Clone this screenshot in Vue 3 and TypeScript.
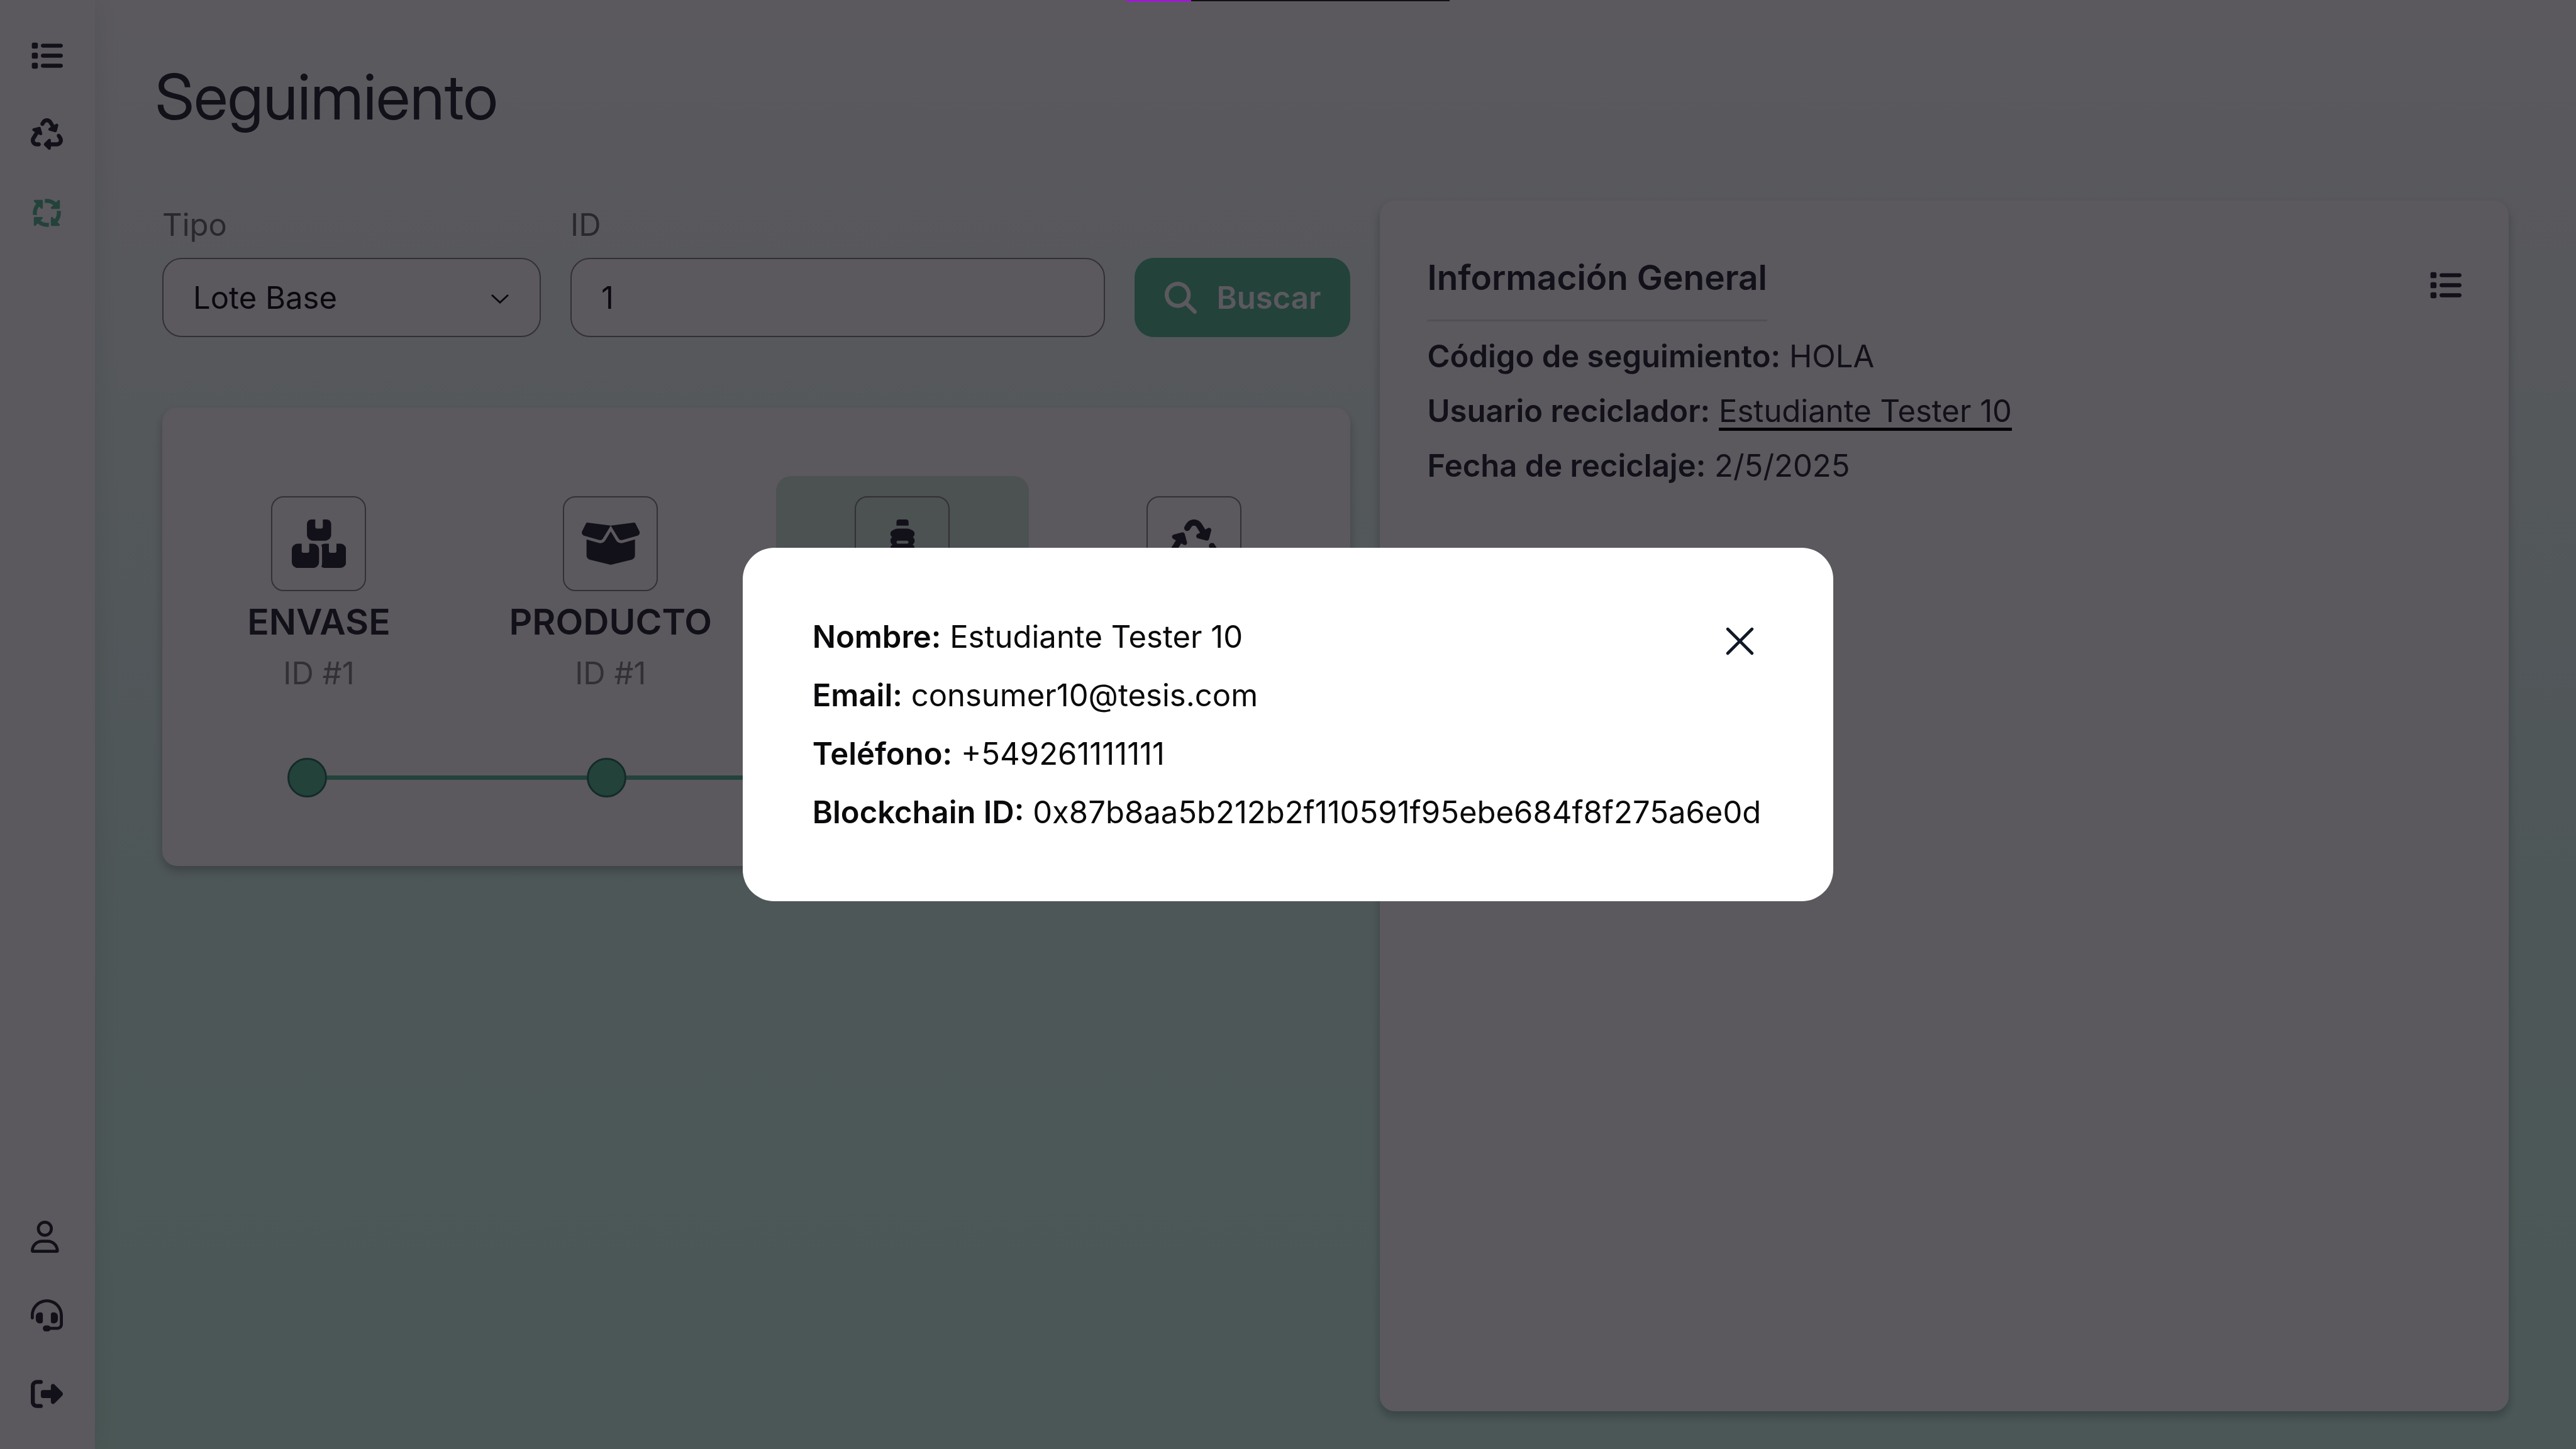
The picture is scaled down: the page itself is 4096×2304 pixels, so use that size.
<script setup lang="ts">
import { ref } from 'vue'

interface Icon {
  box: string
  path: string
}

interface Stage {
  icon: string
  name?: string
  code?: string
}

const icons: Record<string, Icon> = {
  list: {
    box: '0 0 512 512',
    path: 'M40 48C26.7 48 16 58.7 16 72v48c0 13.3 10.7 24 24 24H88c13.3 0 24-10.7 24-24V72c0-13.3-10.7-24-24-24H40zM192 64c-17.7 0-32 14.3-32 32s14.3 32 32 32H480c17.7 0 32-14.3 32-32s-14.3-32-32-32H192zm0 160c-17.7 0-32 14.3-32 32s14.3 32 32 32H480c17.7 0 32-14.3 32-32s-14.3-32-32-32H192zm0 160c-17.7 0-32 14.3-32 32s14.3 32 32 32H480c17.7 0 32-14.3 32-32s-14.3-32-32-32H192zM16 232v48c0 13.3 10.7 24 24 24H88c13.3 0 24-10.7 24-24V232c0-13.3-10.7-24-24-24H40c-13.3 0-24 10.7-24 24zM40 368c-13.3 0-24 10.7-24 24v48c0 13.3 10.7 24 24 24H88c13.3 0 24-10.7 24-24V392c0-13.3-10.7-24-24-24H40z',
  },
  recycle: {
    box: '0 0 512 512',
    path: 'M174.7 45.1C192.2 17 223 0 256 0s63.8 17 81.3 45.1l38.6 61.7 27-15.6c8.4-4.9 18.9-4.2 26.6 1.7s11.1 15.9 8.6 25.3l-23.4 87.4c-3.4 12.8-16.6 20.4-29.4 17l-87.4-23.4c-9.4-2.5-16.3-10.4-17.6-20s3.4-19.1 11.8-23.9l28.4-16.4L283 79c-5.8-9.3-16-15-27-15s-21.2 5.7-27 15l-17.5 28c-9.2 14.8-28.6 19.5-43.6 10.5c-15.3-9.2-20.2-29.2-10.7-44.4l17.5-28zM429.5 251.9c15-9 34.4-4.3 43.6 10.5l24.4 39.1c9.4 15.1 14.4 32.4 14.6 50.2c.3 53.1-42.7 96.4-95.8 96.4L320 448v32c0 9.7-5.8 18.5-14.8 22.2s-19.3 1.7-26.2-5.2l-64-64c-9.4-9.4-9.4-24.6 0-33.9l64-64c6.9-6.9 17.2-8.9 26.2-5.2s14.8 12.5 14.8 22.2v32l96.2 0c17.6 0 31.9-14.4 31.8-32c0-5.9-1.7-11.7-4.8-16.7l-24.4-39.1c-9.5-15.2-4.7-35.2 10.7-44.4zm-364.6-31L36 204.2c-8.4-4.9-13.1-14.3-11.8-23.9s8.2-17.5 17.6-20l87.4-23.4c12.8-3.4 26 4.2 29.4 17L182 241.2c2.5 9.4-.9 19.3-8.6 25.3s-18.2 6.6-26.6 1.7l-26.5-15.3L68.8 335.3c-3.1 5-4.8 10.8-4.8 16.7c-.1 17.6 14.2 32 31.8 32l32.2 0c17.7 0 32 14.3 32 32s-14.3 32-32 32l-32.2 0C42.7 448-.3 404.8 0 351.6c.1-17.8 5.1-35.1 14.6-50.2l50.3-80.5z',
  },
  tracking: {
    box: '0 0 512 512',
    path: 'M256 96c38.4 0 73.7 13.5 101.3 36.1l-32.6 32.6c-4.6 4.6-5.9 11.5-3.5 17.4s8.3 9.9 14.8 9.9H448c8.8 0 16-7.2 16-16V64c0-6.5-3.9-12.3-9.9-14.8s-12.9-1.1-17.4 3.5l-34 34C363.4 52.6 312.1 32 256 32c-10.9 0-21.5 .8-32 2.3V99.2c10.3-2.1 21-3.2 32-3.2zM132.1 154.7l32.6 32.6c4.6 4.6 11.5 5.9 17.4 3.5s9.9-8.3 9.9-14.8V64c0-8.8-7.2-16-16-16H64c-6.5 0-12.3 3.9-14.8 9.9s-1.1 12.9 3.5 17.4l34 34C52.6 148.6 32 199.9 32 256c0 10.9 .8 21.5 2.3 32H99.2c-2.1-10.3-3.2-21-3.2-32c0-38.4 13.5-73.7 36.1-101.3zM477.7 224H412.8c2.1 10.3 3.2 21 3.2 32c0 38.4-13.5 73.7-36.1 101.3l-32.6-32.6c-4.6-4.6-11.5-5.9-17.4-3.5s-9.9 8.3-9.9 14.8V448c0 8.8 7.2 16 16 16H448c6.5 0 12.3-3.9 14.8-9.9s1.1-12.9-3.5-17.4l-34-34C459.4 363.4 480 312.1 480 256c0-10.9-.8-21.5-2.3-32zM256 416c-38.4 0-73.7-13.5-101.3-36.1l32.6-32.6c4.6-4.6 5.9-11.5 3.5-17.4s-8.3-9.9-14.8-9.9H64c-8.8 0-16 7.2-16 16l0 112c0 6.5 3.9 12.3 9.9 14.8s12.9 1.1 17.4-3.5l34-34C148.6 459.4 199.9 480 256 480c10.9 0 21.5-.8 32-2.3V412.8c-10.3 2.1-21 3.2-32 3.2z',
  },
  user: {
    box: '0 0 448 512',
    path: 'M304 128a80 80 0 1 0 -160 0 80 80 0 1 0 160 0zM96 128a128 128 0 1 1 256 0A128 128 0 1 1 96 128zM49.3 464H398.7c-8.9-63.3-63.3-112-129-112H178.3c-65.7 0-120.1 48.7-129 112zM0 482.3C0 383.8 79.8 304 178.3 304h91.4C368.2 304 448 383.8 448 482.3c0 16.4-13.3 29.7-29.7 29.7H29.7C13.3 512 0 498.7 0 482.3z',
  },
  headset: {
    box: '0 0 512 512',
    path: 'M256 48C141.1 48 48 141.1 48 256v40c0 13.3-10.7 24-24 24s-24-10.7-24-24V256C0 114.6 114.6 0 256 0S512 114.6 512 256V400.1c0 48.6-39.4 88-88.1 88L313.6 488c-8.3 14.3-23.8 24-41.6 24H240c-26.5 0-48-21.5-48-48s21.5-48 48-48h32c17.8 0 33.3 9.7 41.6 24l110.4 .1c22.1 0 40-17.9 40-40V256c0-114.9-93.1-208-208-208zM144 208h16c17.7 0 32 14.3 32 32V352c0 17.7-14.3 32-32 32H144c-35.3 0-64-28.7-64-64V272c0-35.3 28.7-64 64-64zm224 0c35.3 0 64 28.7 64 64v48c0 35.3-28.7 64-64 64H352c-17.7 0-32-14.3-32-32V240c0-17.7 14.3-32 32-32h16z',
  },
  logout: {
    box: '0 0 512 512',
    path: 'M377.9 105.9L500.7 228.7c7.2 7.2 11.3 17.1 11.3 27.3s-4.1 20.1-11.3 27.3L377.9 406.1c-6.4 6.4-15 9.9-24 9.9c-18.7 0-33.9-15.2-33.9-33.9l0-62.1-128 0c-17.7 0-32-14.3-32-32l0-64c0-17.7 14.3-32 32-32l128 0 0-62.1c0-18.7 15.2-33.9 33.9-33.9c9 0 17.6 3.6 24 9.9zM160 96L96 96c-17.7 0-32 14.3-32 32l0 256c0 17.7 14.3 32 32 32l64 0c17.7 0 32 14.3 32 32s-14.3 32-32 32l-64 0c-53 0-96-43-96-96L0 128C0 75 43 32 96 32l64 0c17.7 0 32 14.3 32 32s-14.3 32-32 32z',
  },
  search: {
    box: '0 0 512 512',
    path: 'M416 208c0 45.9-14.9 88.3-40 122.7L502.6 457.4c12.5 12.5 12.5 32.8 0 45.3s-32.8 12.5-45.3 0L330.7 376c-34.4 25.2-76.8 40-122.7 40C93.1 416 0 322.9 0 208S93.1 0 208 0S416 93.1 416 208zM208 352a144 144 0 1 0 0-288 144 144 0 1 0 0 288z',
  },
  boxes: {
    box: '0 0 576 512',
    path: 'M248 0H208c-26.5 0-48 21.5-48 48V160c0 35.3 28.7 64 64 64H352c35.3 0 64-28.7 64-64V48c0-26.5-21.5-48-48-48H328V80c0 8.8-7.2 16-16 16H264c-8.8 0-16-7.2-16-16V0zM64 256c-35.3 0-64 28.7-64 64V448c0 35.3 28.7 64 64 64H224c35.3 0 64-28.7 64-64V320c0-35.3-28.7-64-64-64H184v80c0 8.8-7.2 16-16 16H120c-8.8 0-16-7.2-16-16V256H64zM352 512H512c35.3 0 64-28.7 64-64V320c0-35.3-28.7-64-64-64H472v80c0 8.8-7.2 16-16 16H408c-8.8 0-16-7.2-16-16V256H352c-15 0-28.8 5.1-39.7 13.8c4.9 10.4 7.7 22 7.7 34.2V464c0 12.2-2.8 23.8-7.7 34.2C323.2 506.9 337 512 352 512z',
  },
  openBox: {
    box: '0 0 640 512',
    path: 'M58.9 42.1c3-6.1 9.6-9.6 16.3-8.7L320 64 564.8 33.4c6.7-.8 13.3 2.7 16.3 8.7l41.7 83.4c9 17.9-.6 39.6-19.8 45.1L439.6 217.3c-13.9 4-28.8-1.9-36.2-14.3L320 64 236.6 203c-7.4 12.4-22.3 18.3-36.2 14.3L37.1 170.6c-19.3-5.5-28.8-27.2-19.8-45.1L58.9 42.1zM321.1 128l54.9 91.4c14.9 24.8 44.6 36.6 72.5 28.6L576 211.6v167c0 22-15 41.2-36.4 46.6l-204.1 51c-10.2 2.6-20.9 2.6-31 0l-204.1-51C79 419.7 64 400.5 64 378.5v-167L191.6 248c27.8 8 57.6-3.8 72.5-28.6L318.9 128h2.2z',
  },
  bottle: {
    box: '0 0 320 512',
    path: 'M120 0h80c13.3 0 24 10.7 24 24V64H96V24c0-13.3 10.7-24 24-24zM32 151.7c0-15.6 9-29.8 23.2-36.5l24.4-11.4c11-5.1 23-7.8 35.1-7.8h90.6c12.1 0 24.1 2.7 35.1 7.8l24.4 11.4c14.1 6.6 23.2 20.8 23.2 36.5c0 14.4-7.5 27-18.9 34.1c11.5 8.8 18.9 22.6 18.9 38.2c0 16.7-8.5 31.4-21.5 40c12.9 8.6 21.5 23.3 21.5 40s-8.5 31.4-21.5 40c12.9 8.6 21.5 23.3 21.5 40s-8.5 31.4-21.5 40c12.9 8.6 21.5 23.3 21.5 40c0 26.5-21.5 48-48 48H80c-26.5 0-48-21.5-48-48c0-16.7 8.5-31.4 21.5-40C40.5 415.4 32 400.7 32 384s8.5-31.4 21.5-40C40.5 335.4 32 320.7 32 304s8.5-31.4 21.5-40C40.5 255.4 32 240.7 32 224c0-15.6 7.4-29.4 18.9-38.2C39.5 178.7 32 166.1 32 151.7zM96 240c0 8.8 7.2 16 16 16h96c8.8 0 16-7.2 16-16s-7.2-16-16-16H112c-8.8 0-16 7.2-16 16zm16 112c-8.8 0-16 7.2-16 16s7.2 16 16 16h96c8.8 0 16-7.2 16-16s-7.2-16-16-16H112z',
  },
}

const topLinks = [
  { icon: 'list', label: 'Listado', active: false },
  { icon: 'recycle', label: 'Reciclaje', active: false },
  { icon: 'tracking', label: 'Seguimiento', active: true },
]

const bottomLinks = [
  { icon: 'user', label: 'Perfil' },
  { icon: 'headset', label: 'Soporte' },
  { icon: 'logout', label: 'Salir' },
]

const stages: Stage[] = [
  { icon: 'boxes', name: 'ENVASE', code: 'ID #1' },
  { icon: 'openBox', name: 'PRODUCTO', code: 'ID #1' },
  { icon: 'bottle' },
  { icon: 'recycle' },
]

const person = [
  { label: 'Nombre:', value: 'Estudiante Tester 10' },
  { label: 'Email:', value: 'consumer10@tesis.com' },
  { label: 'Teléfono:', value: '+549261111111' },
  { label: 'Blockchain ID:', value: '0x87b8aa5b212b2f110591f95ebe684f8f275a6e0d' },
]

const selectedStage = ref(2)
const kind = ref('base')
const lotId = ref('1')
const personOpen = ref(true)
</script>

<template>
  <div class="page">
    <nav class="sidebar">
      <div class="links">
        <a v-for="l in topLinks" :key="l.icon" href="#" class="link" :class="{ active: l.active }" :aria-label="l.label">
          <svg class="icon" :viewBox="icons[l.icon].box"><path :d="icons[l.icon].path" /></svg>
        </a>
      </div>
      <div class="links">
        <a v-for="l in bottomLinks" :key="l.icon" href="#" class="link" :aria-label="l.label">
          <svg class="icon" :viewBox="icons[l.icon].box"><path :d="icons[l.icon].path" /></svg>
        </a>
      </div>
    </nav>

    <main class="main">
      <h1 class="title">Seguimiento</h1>
      <div class="columns">
        <section class="left">
          <form class="search" @submit.prevent>
            <div class="field kind">
              <label for="kind">Tipo</label>
              <div class="select-wrap">
                <select id="kind" v-model="kind" class="control">
                  <option value="base">Lote Base</option>
                </select>
                <svg class="chevron" viewBox="0 0 30 16"><path d="M2 2 15 14 28 2" /></svg>
              </div>
            </div>
            <div class="field lot">
              <label for="lot">ID</label>
              <input id="lot" v-model="lotId" class="control" type="text" />
            </div>
            <button class="submit" type="submit">
              <svg class="icon" :viewBox="icons.search.box"><path :d="icons.search.path" /></svg>
              Buscar
            </button>
          </form>

          <div class="card stages-card">
            <div class="stages">
              <button
                v-for="(s, i) in stages"
                :key="s.icon"
                type="button"
                class="stage"
                :class="{ selected: i === selectedStage }"
                @click="selectedStage = i"
              >
                <span class="tile">
                  <svg class="tile-icon" :viewBox="icons[s.icon].box"><path :d="icons[s.icon].path" /></svg>
                </span>
                <span v-if="s.name" class="stage-name">{{ s.name }}</span>
                <span v-if="s.code" class="stage-code">{{ s.code }}</span>
              </button>
            </div>
            <div class="track">
              <template v-for="(s, i) in stages" :key="s.icon">
                <span v-if="i > 0" class="line"></span>
                <span class="dot"></span>
              </template>
            </div>
          </div>
        </section>

        <section class="card info">
          <div class="info-head">
            <h2>Información General</h2>
            <button type="button" class="plain" aria-label="Ver detalle">
              <svg class="icon" :viewBox="icons.list.box"><path :d="icons.list.path" /></svg>
            </button>
          </div>
          <p><strong>Código de seguimiento:</strong> HOLA</p>
          <p>
            <strong>Usuario reciclador:</strong>&#32;<a href="#" @click.prevent="personOpen = true">Estudiante Tester 10</a>
          </p>
          <p><strong>Fecha de reciclaje:</strong> 2/5/2025</p>
        </section>
      </div>
    </main>

    <div v-if="personOpen" class="overlay">
      <div class="dialog" role="dialog" aria-modal="true">
        <button type="button" class="close" aria-label="Cerrar" @click="personOpen = false">
          <svg viewBox="0 0 24 24"><path d="M6 18 18 6M6 6l12 12" /></svg>
        </button>
        <p v-for="row in person" :key="row.label">
          <strong>{{ row.label }}</strong> {{ row.value }}
        </p>
      </div>
    </div>
    <div class="progress"><span></span></div>
  </div>
</template>

<style>
html,
body {
  margin: 0;
  overflow: hidden;
}
</style>

<style scoped>
.page {
  --ink: #2f2f38;
  --green: #5ebd97;
  --muted: #8a8a8a;
  display: flex;
  min-height: 100vh;
  background: linear-gradient(180deg, #ffffff 0%, #daf8ee 60%, #cefae7 100%);
  color: var(--ink);
  font-family: Inter, 'Liberation Sans', sans-serif;
  font-size: 49px;
}
.page * {
  box-sizing: border-box;
}
button,
select,
input {
  font: inherit;
  color: inherit;
}
h1,
h2,
p {
  margin: 0;
}
strong {
  font-weight: 600;
}
svg {
  display: block;
  fill: currentColor;
}
.icon {
  height: 51px;
}

.sidebar {
  display: flex;
  flex-direction: column;
  justify-content: space-between;
  width: 151px;
  padding: 63px 50px 62px 49px;
  background: #ffffff;
  box-shadow: 0 0 40px rgba(0, 40, 30, 0.1);
}
.links {
  display: flex;
  flex-direction: column;
  gap: 74px;
}
.link {
  color: inherit;
}
.link.active {
  color: var(--green);
}

.main {
  flex: 1;
  display: flex;
  flex-direction: column;
  padding: 78px 96px 60px;
}
.title {
  font-family: 'Inter Display', Inter, 'Liberation Sans', sans-serif;
  font-size: 100px;
  line-height: 152px;
  font-weight: 400;
}
.columns {
  flex: 1;
  display: grid;
  grid-template-columns: 1890fr 1795fr;
  gap: 47px;
  padding: 0 11px;
  margin-top: 89px;
}
.left {
  display: flex;
  flex-direction: column;
  gap: 112px;
}
.search {
  display: flex;
  align-items: flex-end;
  gap: 47px;
}
.field {
  display: flex;
  flex-direction: column;
  gap: 14px;
}
.field label {
  line-height: 77px;
  color: #727272;
}
.kind {
  width: 602px;
}
.lot {
  flex: 1;
}
.select-wrap {
  position: relative;
}
.control {
  appearance: none;
  display: block;
  width: 100%;
  height: 126px;
  padding: 0 47px;
  border: 2px solid var(--muted);
  border-radius: 31px;
  background: #ffffff;
  color: #1a1a1f;
}
.chevron {
  position: absolute;
  right: 50px;
  top: 57px;
  width: 30px;
  height: 16px;
  fill: none;
  stroke: #1a1a1f;
  stroke-width: 3;
  pointer-events: none;
}
.submit {
  display: flex;
  align-items: center;
  justify-content: center;
  gap: 32px;
  width: 343px;
  height: 126px;
  padding: 0;
  border: 0;
  border-radius: 31px;
  background: var(--green);
  color: #ffffff;
  font-weight: 600;
}

.card {
  border-radius: 24px;
  background: #ffffff;
  box-shadow: 0 8px 15px rgba(0, 20, 15, 0.25);
}
.stages-card {
  padding: 109px 48px;
}
.stages {
  display: grid;
  grid-template-columns: repeat(4, 1fr);
  gap: 62px;
}
.stage {
  display: flex;
  flex-direction: column;
  align-items: center;
  padding: 32px 0;
  border: 0;
  border-radius: 24px;
  background: none;
}
.stage.selected {
  background: #d3e9dd;
}
.tile {
  display: flex;
  align-items: center;
  justify-content: center;
  width: 151px;
  height: 151px;
  border: 2px solid var(--muted);
  border-radius: 20px;
}
.tile-icon {
  height: 77px;
}
.stage-name {
  margin-top: 6px;
  font-size: 57px;
  line-height: 86px;
  font-weight: 600;
}
.stage-code {
  line-height: 78px;
  color: var(--muted);
}
.track {
  display: flex;
  align-items: center;
  padding: 0 151px;
  margin-top: 63px;
}
.dot {
  width: 63px;
  height: 63px;
  border: 3px solid #367a66;
  border-radius: 50%;
  background: var(--green);
}
.line {
  flex: 1;
  height: 7px;
  background: var(--green);
}

.info {
  padding: 80px 75px;
}
.info-head {
  display: flex;
  align-items: center;
  justify-content: space-between;
  margin-bottom: 12px;
}
h2 {
  padding-bottom: 25px;
  border-bottom: 3px solid #e2e2e2;
  font-size: 55px;
  line-height: 84px;
  font-weight: 600;
}
.plain {
  padding: 0 0 4px;
  border: 0;
  background: none;
}
.info p {
  line-height: 87px;
}
.info a {
  color: inherit;
  text-decoration: underline #000000 5px;
  text-underline-offset: 9px;
  text-decoration-skip-ink: none;
}

.overlay {
  position: fixed;
  inset: 0;
  display: flex;
  align-items: center;
  justify-content: center;
  background: rgba(3, 0, 8, 0.65);
}
.dialog {
  position: relative;
  display: flex;
  flex-direction: column;
  gap: 26px;
  padding: 108px 115px 108px 111px;
  border-radius: 50px;
  background: #ffffff;
  color: #0a0a0c;
}
.dialog p {
  line-height: 67px;
}
.close {
  position: absolute;
  top: 110px;
  right: 110px;
  width: 77px;
  height: 77px;
  padding: 0;
  border: 0;
  background: none;
  color: #111827;
}
.close svg {
  fill: none;
  stroke: currentColor;
  stroke-width: 1.5;
  stroke-linecap: round;
}
.progress {
  position: fixed;
  top: 0;
  left: 50%;
  width: 514px;
  height: 2px;
  margin-left: -257px;
  background: #111111;
}
.progress span {
  display: block;
  width: 20%;
  height: 100%;
  background: #b700ff;
}
</style>
